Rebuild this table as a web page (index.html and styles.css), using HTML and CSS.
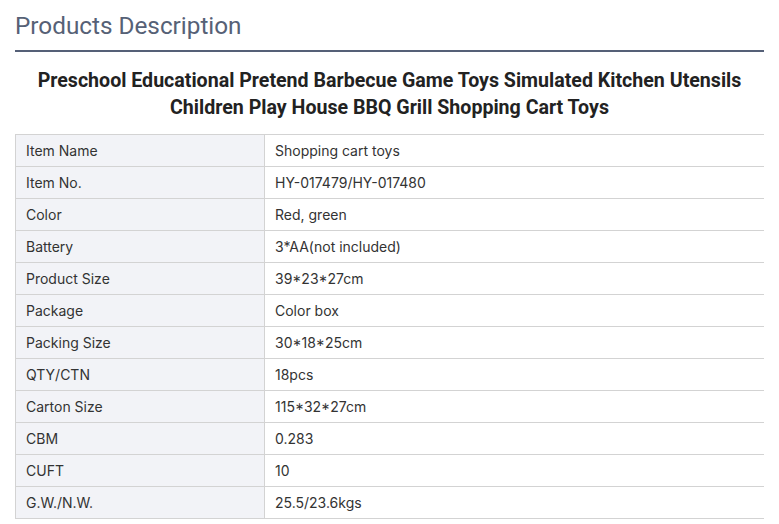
FILE: index.html
```html
<!DOCTYPE html>
<html>
<head>
<meta charset="utf-8">
<link rel="stylesheet" href="styles.css">
</head>
<body>
<div class="wrap">
  <h2 class="heading">Products Description</h2>
  <h1 class="title">Preschool Educational Pretend Barbecue Game Toys Simulated Kitchen Utensils<br>Children Play House BBQ Grill Shopping Cart Toys</h1>
  <table class="spec">
    <tr><td class="k">Item Name</td><td>Shopping cart toys</td></tr>
    <tr><td class="k">Item No.</td><td>HY-017479/HY-017480</td></tr>
    <tr><td class="k">Color</td><td>Red, green</td></tr>
    <tr><td class="k">Battery</td><td>3*AA(not included)</td></tr>
    <tr><td class="k">Product Size</td><td>39*23*27cm</td></tr>
    <tr><td class="k">Package</td><td>Color box</td></tr>
    <tr><td class="k">Packing Size</td><td>30*18*25cm</td></tr>
    <tr><td class="k">QTY/CTN</td><td>18pcs</td></tr>
    <tr><td class="k">Carton Size</td><td>115*32*27cm</td></tr>
    <tr><td class="k">CBM</td><td>0.283</td></tr>
    <tr><td class="k">CUFT</td><td>10</td></tr>
    <tr><td class="k">G.W./N.W.</td><td>25.5/23.6kgs</td></tr>
  </table>
</div>
</body>
</html>
```
FILE: styles.css
```css
html, body { margin: 0; padding: 0; background: #fff; }
.wrap { padding: 0 15px; width: 749px; }
.heading {
  margin: 0;
  font-family: Roboto, sans-serif;
  font-weight: 400;
  font-size: 24.3px;
  line-height: 28px;
  color: #566176;
  padding-top: 12px;
  padding-bottom: 10px;
  border-bottom: 2px solid #556077;
}
.title {
  margin: 0;
  padding: 15px 0 13px;
  text-align: center;
  font-family: Roboto, sans-serif;
  font-weight: 700;
  font-size: 19.6px;
  line-height: 27px;
  color: #222;
}
.spec {
  width: 749px;
  border-collapse: collapse;
  font-family: Inter, sans-serif;
  font-size: 14px;
  color: #333;
}
.spec td {
  height: 32px;
  padding: 0 0 0 10px;
  border-top: 1px solid #d3d3d3;
  border-bottom: 1px solid #d3d3d3;
  box-sizing: border-box;
}
.spec td.k {
  width: 249px;
  background: #f2f3f7;
  border-left: 1px solid #d3d3d3;
  border-right: 1px solid #d3d3d3;
}
```
